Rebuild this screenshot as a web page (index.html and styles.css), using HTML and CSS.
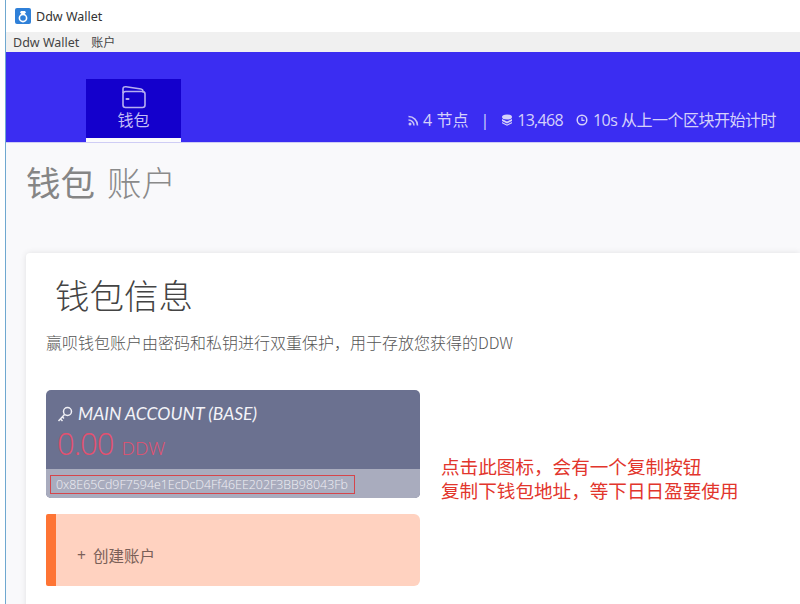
FILE: index.html
```html
<!DOCTYPE html>
<html lang="zh">
<head>
<meta charset="utf-8">
<title>Ddw Wallet</title>
<link rel="stylesheet" href="styles.css">
</head>
<body>
<div class="window">
  <div class="titlebar">
    <svg class="app-icon" width="16" height="16" viewBox="0 0 16 16"><rect width="16" height="16" rx="2" fill="#2f80d8"/><circle cx="8" cy="10" r="3.6" fill="none" stroke="#fff" stroke-width="1.6"/><path d="M6 3h4l1 1.500-2 2H7L5 4.500z" fill="#fff"/></svg>
    <span>Ddw Wallet</span>
  </div>
  <div class="menubar"><span>Ddw Wallet</span><span class="menu-cjk">账户</span></div>
  <header class="header">
    <div class="tab">
      <svg width="26" height="24" viewBox="0 0 26 24" fill="none" stroke="#b6aef0" stroke-width="1.6" stroke-linejoin="round" stroke-linecap="round"><path d="M2 7.500V4q0-2.500 3-2.200l15 2.200q2 .3 2 2v1"/><rect x="2" y="6.500" width="22" height="16" rx="2.500"/><path d="M5.500 14h2" stroke-width="2"/></svg>
      <span>钱包</span>
    </div>
    <div class="status">
      <svg width="13" height="13" viewBox="0 0 13 13" fill="none" stroke="#c9c4f7" stroke-width="1.500"><circle cx="3" cy="10" r="1.500" fill="#c9c4f7" stroke="none"/><path d="M1.500 6a5.500 5.500 0 0 1 5.500 5.500M1.500 2.500a9 9 0 0 1 9 9"/></svg>
      <span class="st-a">4 节点</span>
      <span class="st-sep">|</span>
      <svg width="12" height="12" viewBox="0 0 12 12" fill="#d5d1fa"><ellipse cx="6" cy="3" rx="5" ry="2.500"/><path d="M1 5l5 2.500L11 5v2L6 9.500 1 7zM1 8l5 2.500L11 8v1.200L6 11.800 1 9.200z"/></svg>
      <span class="st-b">13,468</span>
      <svg class="st-clock" width="12" height="12" viewBox="0 0 12 12" fill="none" stroke="#d5d1fa" stroke-width="1.500"><circle cx="6" cy="6" r="4.800"/><path d="M6 3.200V6.300H8.500" stroke-width="1.200"/></svg>
      <span class="st-c">10s 从上一个区块开始计时</span>
    </div>
  </header>
  <main class="page">
    <h1 class="page-title"><span class="pt-strong">钱包</span><span class="pt-light">账户</span></h1>
    <section class="card">
      <h2 class="card-title">钱包信息</h2>
      <p class="card-desc">赢呗钱包账户由密码和私钥进行双重保护，用于存放您获得的DDW</p>
      <div class="row">
        <div class="accounts">
          <div class="account">
            <div class="account-top">
              <div class="account-name">
                <svg width="16" height="17" viewBox="0 0 16 17" fill="none" stroke="#f0f0f6" stroke-width="1.500"><circle cx="10.500" cy="5.500" r="4"/><path d="M7.500 8.500L1.500 15M3.500 13l2 2M5.500 11l1.500 1.500"/></svg>
                <span>MAIN ACCOUNT (BASE)</span>
              </div>
              <div class="balance"><span class="amount">0.00</span><span class="unit">DDW</span></div>
            </div>
            <div class="account-bottom"><span class="address">0x8E65Cd9F7594e1EcDcD4Ff46EE202F3BB98043Fb</span></div>
          </div>
          <div class="create"><span class="plus">+</span><span>创建账户</span></div>
        </div>
        <div class="note">
          <p>点击此图标，会有一个复制按钮</p>
          <p>复制下钱包地址，等下日日盈要使用</p>
        </div>
      </div>
    </section>
  </main>
</div>
</body>
</html>
```
FILE: styles.css
```css
* { box-sizing: border-box; }
html, body { margin: 0; padding: 0; height: 100%; overflow: hidden; background: #fff; }
body { font-family: "Open Sans", "Noto Sans CJK SC", sans-serif; }
p, h1, h2 { margin: 0; font-weight: 400; }
.window { margin-left: 5px; border-left: 1px solid #6fa8d0; height: 604px; display: flex; flex-direction: column; overflow: hidden; }
.titlebar { flex: none; height: 32px; display: flex; align-items: center; gap: 5px; padding: 0 0 0 9px; background: #fff; color: #333; font: 12.500px "Noto Sans", sans-serif; }
.app-icon { flex: none; }
.menubar { flex: none; height: 20px; background: #f0f0f0; display: flex; align-items: center; gap: 12px; padding-left: 7px; color: #444; font: 12.500px "Noto Sans", "Noto Sans CJK SC", sans-serif; }
.menu-cjk { font-size: 12px; }
.header { flex: none; height: 91px; background: #3b2df2; border-bottom: 1px solid #cfcdf5; display: flex; justify-content: space-between; align-items: flex-end; padding-left: 80px; color: #d5d1fa; }
.tab { width: 95px; height: 63px; background: #1400cc; border-bottom: 4px solid #fbfbfd; display: flex; flex-direction: column; align-items: center; padding-top: 6px; color: #c3bdf5; font: 16px/18px "Noto Sans CJK SC", sans-serif; gap: 1px; }
.status { display: flex; align-items: center; height: 38px; padding-right: 24px; margin-bottom: 3px; font: 16px/20px "Open Sans", "Noto Sans CJK SC", sans-serif; }
.status span { white-space: nowrap; }
.st-a { margin-left: 3px; }
.st-sep { margin: 0 12px; }
.st-b { margin-left: 4px; letter-spacing: -.7px; }
.st-clock { margin-left: 13px; }
.st-c { margin-left: 5px; letter-spacing: -.5px; }
.page { flex: none; height: 461px; background: #f9f9fb; padding: 15px 0 0 20px; }
.page-title { display: flex; gap: 12px; font: 34.500px/46px "Noto Sans CJK SC", sans-serif; color: #858585; }
.pt-light { font-weight: 300; color: #8a8a8a; }
.card { margin-top: 49px; background: #fff; border-radius: 4px 0 0 4px; box-shadow: 0 0 6px rgba(0,0,0,.1); padding: 18px 0 0 20px; height: 400px; }
.card-title { font: 34.500px/46px "Noto Sans CJK SC", sans-serif; font-weight: 300; color: #444; margin-left: 9px; }
.card-desc { margin-top: 13px; font: 16px/24px "Noto Sans CJK SC", sans-serif; font-weight: 300; color: #555; }
.row { margin-top: 36px; display: flex; align-items: flex-start; }
.accounts { width: 374px; flex: none; display: flex; flex-direction: column; gap: 16px; }
.account { height: 108px; border-radius: 5px; overflow: hidden; background: #6b7190; display: flex; flex-direction: column; }
.account-top { height: 79px; padding: 13px 0 0 11px; }
.account-name { display: flex; align-items: center; gap: 5px; color: #f3f3f8; font: italic 17.600px/22px "Lato", "Open Sans", sans-serif; }
.balance { display: flex; align-items: baseline; color: #e4506f; margin-top: 1px; }
.amount { font: 300 31px/34px "Open Sans", sans-serif; letter-spacing: -1px; }
.unit { margin-left: 8px; font: 300 19px/24px "Open Sans", sans-serif; }
.account-bottom { flex: 1; background: #a9acbe; padding: 6px 0 0 4px; }
.address { display: block; width: 305px; height: 19px; border: 1px solid #d5454b; padding-left: 5px; font: 300 12.400px/17px "Open Sans", sans-serif; color: #f0f0f5; white-space: nowrap; }
.create { height: 72px; border-left: 10px solid #fe7434; border-radius: 2px 6px 6px 2px; background: #ffd2c0; display: flex; align-items: center; padding: 9px 0 0 21px; gap: 7px; color: #7a6058; font: 15.500px/20px "Noto Sans CJK SC", sans-serif; }
.plus { font-family: "Open Sans", sans-serif; }
.note { margin: 66px 0 0 21px; color: #e2352c; font: 300 18.600px/24px "Liberation Sans", "Noto Sans CJK SC", sans-serif; white-space: nowrap; }
```
